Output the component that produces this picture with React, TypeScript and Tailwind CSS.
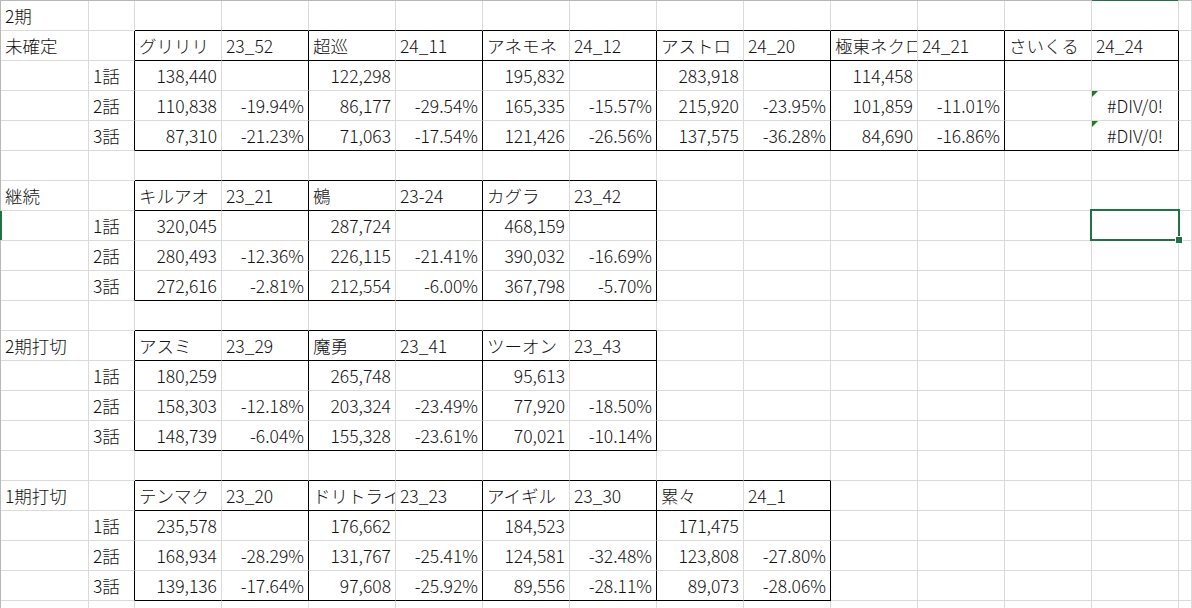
import clsx from "clsx";

type Table = { top: number; bottom: number; left: number; right: number };

// rows are 1-based, columns 0-based from A
const sheet: Record<number, string[]> = {
  1: ["2期"],
  2: ["未確定", "", "グリリリ", "23_52", "超巡", "24_11", "アネモネ", "24_12", "アストロ", "24_20", "極東ネクロ", "24_21", "さいくる", "24_24"],
  3: ["", "1話", "138,440", "", "122,298", "", "195,832", "", "283,918", "", "114,458"],
  4: ["", "2話", "110,838", "-19.94%", "86,177", "-29.54%", "165,335", "-15.57%", "215,920", "-23.95%", "101,859", "-11.01%", "", "#DIV/0!"],
  5: ["", "3話", "87,310", "-21.23%", "71,063", "-17.54%", "121,426", "-26.56%", "137,575", "-36.28%", "84,690", "-16.86%", "", "#DIV/0!"],
  7: ["継続", "", "キルアオ", "23_21", "鵺", "23-24", "カグラ", "23_42"],
  8: ["", "1話", "320,045", "", "287,724", "", "468,159"],
  9: ["", "2話", "280,493", "-12.36%", "226,115", "-21.41%", "390,032", "-16.69%"],
  10: ["", "3話", "272,616", "-2.81%", "212,554", "-6.00%", "367,798", "-5.70%"],
  12: ["2期打切", "", "アスミ", "23_29", "魔勇", "23_41", "ツーオン", "23_43"],
  13: ["", "1話", "180,259", "", "265,748", "", "95,613"],
  14: ["", "2話", "158,303", "-12.18%", "203,324", "-23.49%", "77,920", "-18.50%"],
  15: ["", "3話", "148,739", "-6.04%", "155,328", "-23.61%", "70,021", "-10.14%"],
  17: ["1期打切", "", "テンマク", "23_20", "ドリトライ", "23_23", "アイギル", "23_30", "累々", "24_1"],
  18: ["", "1話", "235,578", "", "176,662", "", "184,523", "", "171,475"],
  19: ["", "2話", "168,934", "-28.29%", "131,767", "-25.41%", "124,581", "-32.48%", "123,808", "-27.80%"],
  20: ["", "3話", "139,136", "-17.64%", "97,608", "-25.92%", "89,556", "-28.11%", "89,073", "-28.06%"],
};

const tables: Table[] = [
  { top: 2, bottom: 5, left: 2, right: 13 },
  { top: 7, bottom: 10, left: 2, right: 7 },
  { top: 12, bottom: 15, left: 2, right: 7 },
  { top: 17, bottom: 20, left: 2, right: 9 },
];

const ROWS = 21;
const COLS = 15;

const rightBlack = (r: number, c: number) =>
  tables.some(
    (t) =>
      r >= t.top &&
      r <= t.bottom &&
      (c === t.left - 1 || (c >= t.left && c <= t.right && (c - t.left) % 2 === 1))
  );

const bottomBlack = (r: number, c: number) =>
  tables.some(
    (t) => c >= t.left && c <= t.right && (r === t.top - 1 || r === t.top || r === t.bottom)
  );

const isNumber = (s: string) => /^-?[\d,]+(\.\d+)?%?$/.test(s);

function ErrorMark() {
  return (
    <svg className="absolute left-0 top-0" width="7" height="7" viewBox="0 0 7 7">
      <polygon points="0,0 6,0 0,6" fill="#1e7b1e" />
    </svg>
  );
}

function Cell({ r, c }: { r: number; c: number }) {
  const text = sheet[r]?.[c] ?? "";
  const isError = text.startsWith("#");
  const selected = r === 8 && c === 13;
  return (
    <div
      className={clsx(
        "relative h-[30px] border-r border-b",
        rightBlack(r, c) ? "border-r-black" : "border-r-[#dadada]",
        bottomBlack(r, c) ? "border-b-black" : "border-b-[#dadada]"
      )}
    >
      <div
        className={clsx(
          "flex h-full items-center overflow-hidden whitespace-nowrap px-[4px] pt-[1px]",
          isError ? "justify-center" : isNumber(text) ? "justify-end" : "justify-start"
        )}
      >
        {text}
      </div>
      {isError && <ErrorMark />}
      {selected && (
        <div className="absolute -left-[2px] -top-[2px] -right-[2px] -bottom-[1px] z-10 border-2 border-[#217346]">
          <div className="absolute -right-[4px] -bottom-[4px] h-[6px] w-[6px] bg-[#217346] outline outline-1 outline-white" />
        </div>
      )}
      {r === 8 && c === 0 && <div className="absolute -left-[1px] top-0 h-full w-[2px] bg-[#217346]" />}
      {r === 1 && c === 13 && <div className="absolute left-0 -top-[1px] h-[1px] w-full bg-[#217346]" />}
    </div>
  );
}

export default function App() {
  return (
    <div className="h-[608px] w-[1192px] overflow-hidden bg-white font-['Noto_Sans_CJK_JP',sans-serif] text-[17.5px] font-light leading-none text-[#111]">
      <div className="grid grid-cols-[88px_46px_repeat(12,87px)_1fr] border-l border-t border-[#b8b8b8]">
        {Array.from({ length: ROWS }, (_, i) =>
          Array.from({ length: COLS }, (_, c) => <Cell key={`${i}-${c}`} r={i + 1} c={c} />)
        )}
      </div>
    </div>
  );
}
